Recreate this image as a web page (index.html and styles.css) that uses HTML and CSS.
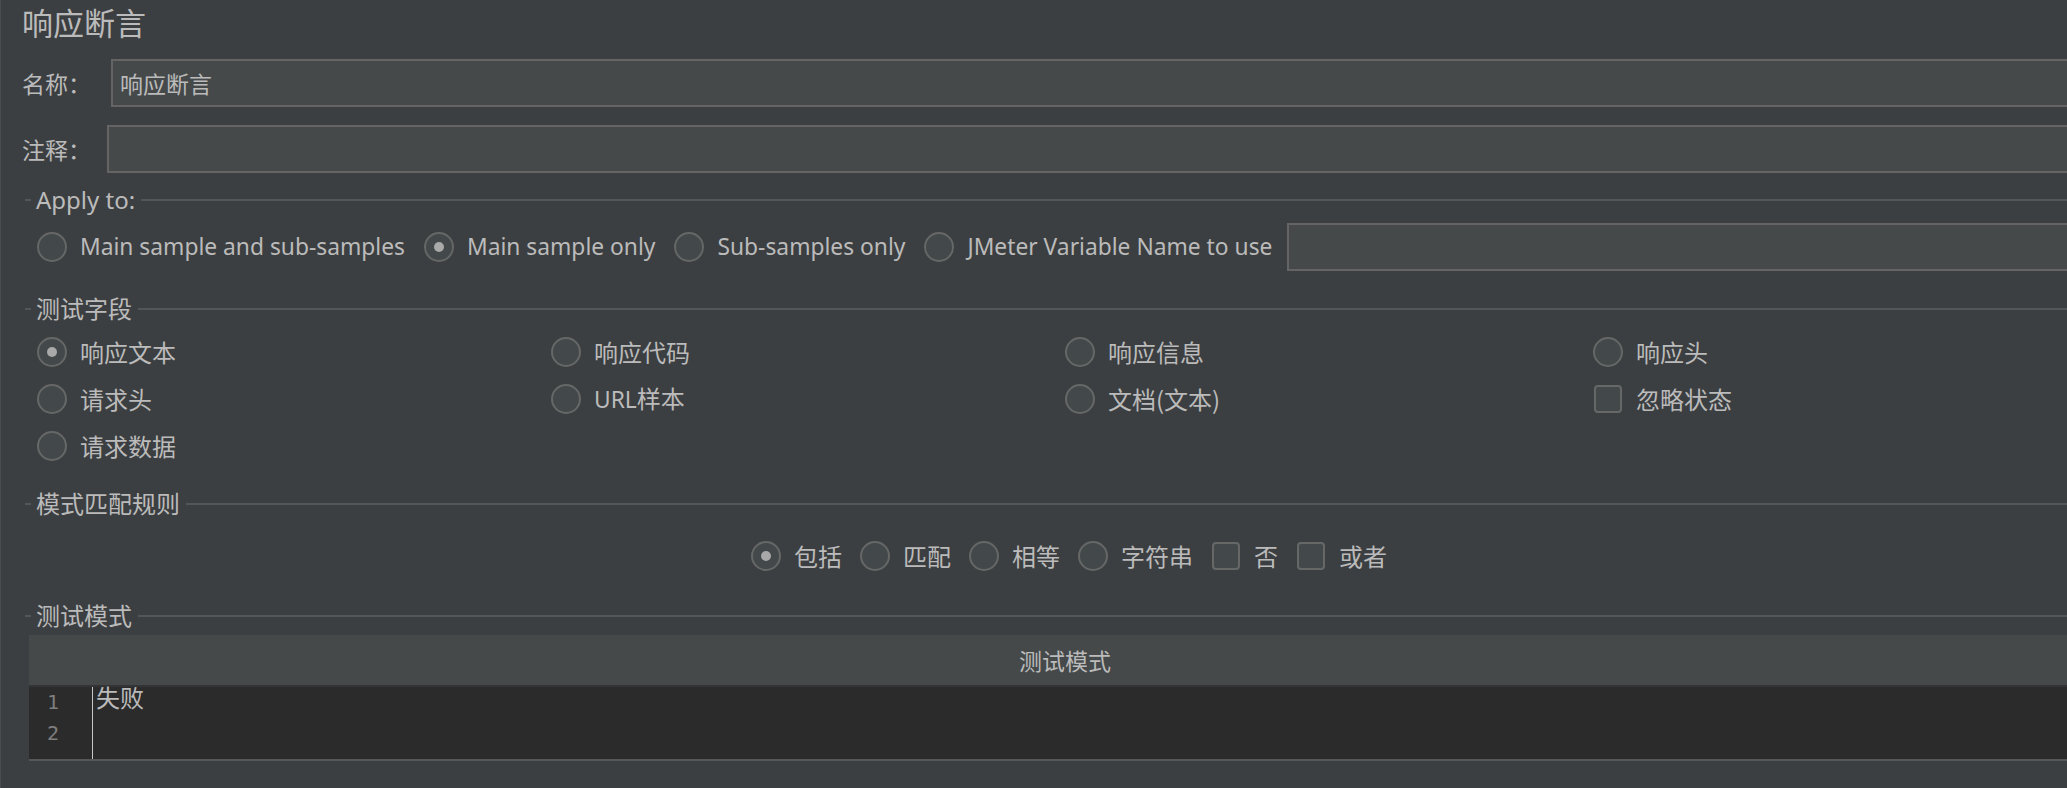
FILE: index.html
```html
<!DOCTYPE html>
<html lang="zh">
<head>
<meta charset="utf-8">
<title>响应断言</title>
<link rel="stylesheet" href="styles.css">
</head>
<body>
<div class="panel">
  <h1 class="title">响应断言</h1>

  <div class="field-row name-row">
    <span class="field-label">名称：</span>
    <div class="text-input">响应断言</div>
  </div>
  <div class="field-row comment-row">
    <span class="field-label">注释：</span>
    <div class="text-input"></div>
  </div>

  <section class="group apply-group">
    <div class="legend"><span class="legend-dash"></span><span class="legend-text">Apply to:</span><span class="legend-line"></span></div>
    <div class="apply-row">
      <span class="option"><span class="radio"></span><span class="opt-text latin">Main sample and sub-samples</span></span>
      <span class="option"><span class="radio checked"></span><span class="opt-text latin">Main sample only</span></span>
      <span class="option"><span class="radio"></span><span class="opt-text latin">Sub-samples only</span></span>
      <span class="option"><span class="radio"></span><span class="opt-text latin">JMeter Variable Name to use</span></span>
      <div class="text-input var-input"></div>
    </div>
  </section>

  <section class="group field-group">
    <div class="legend"><span class="legend-dash"></span><span class="legend-text">测试字段</span><span class="legend-line"></span></div>
    <div class="field-grid">
      <span class="option"><span class="radio checked"></span><span class="opt-text">响应文本</span></span>
      <span class="option"><span class="radio"></span><span class="opt-text">响应代码</span></span>
      <span class="option"><span class="radio"></span><span class="opt-text">响应信息</span></span>
      <span class="option"><span class="radio"></span><span class="opt-text">响应头</span></span>
      <span class="option"><span class="radio"></span><span class="opt-text">请求头</span></span>
      <span class="option"><span class="radio"></span><span class="opt-text"><span class="latin">URL</span>样本</span></span>
      <span class="option"><span class="radio"></span><span class="opt-text">文档(文本)</span></span>
      <span class="option"><span class="checkbox"></span><span class="opt-text">忽略状态</span></span>
      <span class="option"><span class="radio"></span><span class="opt-text">请求数据</span></span>
    </div>
  </section>

  <section class="group rule-group">
    <div class="legend"><span class="legend-dash"></span><span class="legend-text">模式匹配规则</span><span class="legend-line"></span></div>
    <div class="rule-row">
      <span class="option"><span class="radio checked"></span><span class="opt-text">包括</span></span>
      <span class="option"><span class="radio"></span><span class="opt-text">匹配</span></span>
      <span class="option"><span class="radio"></span><span class="opt-text">相等</span></span>
      <span class="option"><span class="radio"></span><span class="opt-text">字符串</span></span>
      <span class="option"><span class="checkbox"></span><span class="opt-text">否</span></span>
      <span class="option"><span class="checkbox"></span><span class="opt-text">或者</span></span>
    </div>
  </section>

  <section class="group pattern-group">
    <div class="legend"><span class="legend-dash"></span><span class="legend-text">测试模式</span><span class="legend-line"></span></div>
    <div class="pattern-table">
      <div class="table-header">测试模式</div>
      <div class="editor">
        <div class="gutter"><div>1</div><div>2</div></div>
        <div class="code"><div>失败</div><div></div></div>
      </div>
    </div>
  </section>
</div>
</body>
</html>
```

FILE: styles.css
```css
html, body {
  margin: 0;
  padding: 0;
  overflow: hidden;
  background: #3c3f41;
}

body {
  width: 2067px;
  height: 788px;
  font-family: "Noto Sans", "Noto Sans CJK SC", sans-serif;
  font-size: 24px;
  color: #bbbbbb;
}

.panel {
  width: 2105px;
  height: 788px;
  box-sizing: border-box;
  border-left: 1px solid #4a4d4f;
  display: flex;
  flex-direction: column;
}

.title {
  margin: 0 0 0 21px;
  height: 44px;
  line-height: 44px;
  font-size: 31px;
  font-weight: normal;
  color: #bbbbbb;
  font-family: "Noto Sans CJK SC", sans-serif;
}

.field-row {
  display: flex;
  align-items: center;
  margin-left: 21px;
  height: 48px;
}

.name-row { margin-top: 15px; }
.comment-row { margin-top: 18px; }

.field-label {
  font-family: "Noto Sans CJK SC", sans-serif;
  font-size: 23px;
  line-height: 48px;
}
.name-row .field-label { margin-right: 20px; }
.comment-row .field-label { margin-right: 16px; }

.text-input {
  flex: 1;
  height: 48px;
  box-sizing: border-box;
  border: 2px solid #646464;
  background: #45494a;
  padding-left: 7px;
  line-height: 44px;
  font-family: "Noto Sans CJK SC", sans-serif;
  font-size: 23px;
  color: #bbbbbb;
}

.group {
  margin-left: 24px;
  display: flex;
  flex-direction: column;
}

.legend {
  display: flex;
  align-items: center;
  height: 30px;
}
.legend-dash {
  width: 6px;
  height: 2px;
  background: #535557;
}
.legend-text {
  margin: 0 6px 0 5px;
  line-height: 30px;
  white-space: nowrap;
}
.legend-line {
  flex: 1;
  height: 2px;
  background: #535557;
}

.apply-group { margin-top: 12px; }
.apply-row {
  display: flex;
  align-items: center;
  height: 48px;
  margin-top: 8px;
  padding-left: 12px;
}
.apply-row .option { margin-right: 19px; }
.apply-row .option:nth-child(4) { margin-right: 15px; }
.var-input { padding: 0; }

.option {
  display: inline-flex;
  align-items: center;
  gap: 13px;
  white-space: nowrap;
}
.opt-text {
  line-height: 30px;
  font-family: "Noto Sans CJK SC", sans-serif;
}
.latin {
  font-family: "Noto Sans", sans-serif;
  font-size: 22.8px;
}

.radio {
  width: 30px;
  height: 30px;
  box-sizing: border-box;
  border: 2px solid #666767;
  border-radius: 50%;
  background: #43494a;
  display: flex;
  align-items: center;
  justify-content: center;
  flex: none;
}
.radio.checked::after {
  content: "";
  width: 10px;
  height: 10px;
  border-radius: 50%;
  background: #a9a9a9;
}

.checkbox {
  width: 28px;
  height: 28px;
  box-sizing: border-box;
  border: 2px solid #666767;
  border-radius: 4px;
  background: #43494a;
  margin: 0 1px;
  flex: none;
}

.field-group { margin-top: 23px; }
.field-grid {
  display: grid;
  grid-template-columns: 514px 514px 528px 1fr;
  grid-auto-rows: 46px;
  row-gap: 1px;
  align-items: center;
  margin-top: 5px;
  padding-left: 12px;
}

.rule-group { margin-top: 20px; }
.rule-row {
  display: flex;
  justify-content: center;
  align-items: center;
  gap: 18px;
  height: 30px;
  margin-top: 22px;
  padding: 0 4px 0 12px;
}

.pattern-group { margin-top: 30px; }
.pattern-table {
  margin: 4px 4px 0 4px;
  display: flex;
  flex-direction: column;
}
.table-header {
  height: 50px;
  line-height: 50px;
  background: #45494a;
  text-align: center;
  font-family: "Noto Sans CJK SC", sans-serif;
  font-size: 23px;
  border-bottom: 2px solid #323436;
}
.editor {
  display: flex;
  height: 72px;
  background: #2b2b2b;
  border-bottom: 2px solid #555759;
}
.gutter {
  width: 64px;
  box-sizing: border-box;
  padding-right: 33px;
  text-align: right;
  border-right: 1px solid #c8c8c8;
  font-family: "DejaVu Sans Mono", monospace;
  font-size: 20px;
  color: #7e7e7e;
}
.gutter div, .code div {
  height: 31px;
  line-height: 31px;
}
.code {
  margin-top: -6px;
  padding-left: 3px;
  font-family: "Noto Sans CJK SC", sans-serif;
  font-size: 24px;
  color: #bbbbbb;
}
```
